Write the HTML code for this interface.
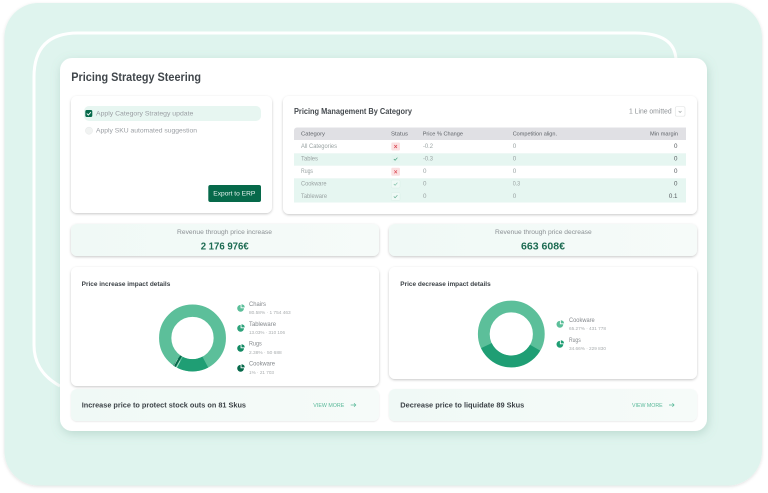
<!DOCTYPE html>
<html><head><meta charset="utf-8"><style>
html,body{margin:0;padding:0;background:#fff;width:768px;height:493px;overflow:hidden}
svg{display:block;filter:blur(.3px)}
text{font-family:"Liberation Sans",sans-serif}
.t{fill:#9a9ea3;font-size:6.5px}
.h{fill:#5f6368;font-size:5.6px}
.c{fill:#9aa3a3;font-size:6.2px}
.s{fill:#a8acae;font-size:4.6px}
.l{fill:#85898d;font-size:6.4px}
.b{fill:#3c4247;font-size:6.4px;font-weight:bold}
.bb{fill:#3c4247;font-size:7.6px;font-weight:bold}
.v{fill:#1c6b52;font-size:10.5px;font-weight:bold}
.m{fill:#58b898;font-size:5.8px}
</style></head><body>
<svg width="768" height="493" viewBox="0 0 768 493" xmlns="http://www.w3.org/2000/svg">
<defs>
<filter id="o" x="-5%" y="-5%" width="110%" height="110%"><feDropShadow dx="0" dy="1" stdDeviation="1.5" flood-color="#000" flood-opacity=".12"/></filter>
<filter id="m" x="-10%" y="-10%" width="120%" height="120%"><feDropShadow dx="1" dy="3" stdDeviation="5" flood-color="#6a9c8c" flood-opacity=".3"/></filter>
<filter id="c" x="-10%" y="-20%" width="120%" height="140%"><feDropShadow dx="0" dy="1" stdDeviation="1.2" flood-color="#000" flood-opacity=".22"/></filter>
<filter id="d" x="-10%" y="-20%" width="120%" height="140%"><feDropShadow dx="0" dy=".7" stdDeviation=".7" flood-color="#000" flood-opacity=".1"/></filter>
<linearGradient id="g" x1="0" y1="0" x2="1" y2="0"><stop offset="0" stop-color="#f0f9f6"/><stop offset="1" stop-color="#f6fbf9"/></linearGradient>
<symbol id="p" viewBox="-4 -4 8 8" overflow="visible"><path d="M-.4-3.1V.3H3A3.4 3.4 0 1 1-.4-3.1Z"/><path d="M.5-3.8A3.4 3.4 0 0 1 3.8-.6H.5Z"/></symbol>
</defs>

<rect x="4.500" y="3" width="757.500" height="482.500" rx="34" fill="#dff4ee" filter="url(#o)"/>
<path d="M60 386Q34 372 34 345L34 77Q34 33 78 33L635 33Q675 33 676 60" fill="none" stroke="#fff" stroke-width="3"/>
<rect x="60" y="58" width="647" height="373" rx="12" fill="#fff" filter="url(#m)"/>

<text x="71.300" y="81" font-size="11.500" font-weight="bold" fill="#40464b" textLength="129.700" lengthAdjust="spacingAndGlyphs">Pricing Strategy Steering</text>

<!-- left card -->
<rect x="71" y="96" width="201" height="117" rx="6" fill="#fff" filter="url(#c)"/>
<rect x="84" y="106" width="177" height="15" rx="5" fill="#e7f6f1"/>
<rect x="85.300" y="110" width="7" height="7" rx="1.500" fill="#06694a"/>
<path d="M86.800 113.500l1.500 1.600 2.600-2.900" fill="none" stroke="#fff" stroke-width=".9"/>
<text class="t" x="96" y="115.300" textLength="97.300" lengthAdjust="spacingAndGlyphs">Apply Category Strategy update</text>
<circle cx="89" cy="130.700" r="3.600" fill="#f1f3f2" stroke="#e6e8e8" stroke-width=".5"/>
<text class="t" x="96" y="132.300" textLength="101" lengthAdjust="spacingAndGlyphs">Apply SKU automated suggestion</text>
<rect x="208.300" y="185" width="52.700" height="17" rx="2" fill="#06694a"/>
<text x="213.300" y="195.700" font-size="6.500" fill="#e8f4f0" textLength="42" lengthAdjust="spacingAndGlyphs">Export to ERP</text>

<!-- right card -->
<rect x="283" y="96" width="414" height="118" rx="6" fill="#fff" filter="url(#c)"/>
<text x="294" y="113.800" font-size="8" font-weight="bold" fill="#454a4f" textLength="118" lengthAdjust="spacingAndGlyphs">Pricing Management By Category</text>
<text x="629" y="113.700" font-size="7" fill="#8d9195" textLength="42.700" lengthAdjust="spacingAndGlyphs">1 Line omitted</text>
<rect x="675.300" y="106.700" width="9.700" height="9.500" rx="1.500" fill="#fff" stroke="#e3e5e5" stroke-width=".7"/>
<path d="M678.700 111l1.400 1.500 1.400-1.500" fill="none" stroke="#9aa0a0" stroke-width=".6"/>

<path d="M294 130.500a3 3 0 0 1 3-3H686V140H294Z" fill="#e0e0e4"/>
<rect x="294" y="153.300" width="392" height="12.400" fill="#e6f6f1"/>
<rect x="294" y="178.300" width="392" height="24.200" fill="#e6f6f1"/>

<text class="h" x="301" y="135.300" textLength="24" lengthAdjust="spacingAndGlyphs">Category</text>
<text class="h" x="391" y="135.300" textLength="17" lengthAdjust="spacingAndGlyphs">Status</text>
<text class="h" x="422.700" y="135.300" textLength="40.300" lengthAdjust="spacingAndGlyphs">Price % Change</text>
<text class="h" x="512.700" y="135.300" textLength="44.300" lengthAdjust="spacingAndGlyphs">Competition align.</text>
<text class="h" x="650" y="135.300" textLength="28" lengthAdjust="spacingAndGlyphs">Min margin</text>

<text class="c" x="301" y="148" textLength="36" lengthAdjust="spacingAndGlyphs">All Categories</text>
<text class="c" x="301" y="160.300" textLength="17" lengthAdjust="spacingAndGlyphs">Tables</text>
<text class="c" x="301" y="173" textLength="12" lengthAdjust="spacingAndGlyphs">Rugs</text>
<text class="c" x="301" y="185.500" textLength="25.500" lengthAdjust="spacingAndGlyphs">Cookware</text>
<text class="c" x="301" y="198.200" textLength="26" lengthAdjust="spacingAndGlyphs">Tableware</text>

<rect x="391.300" y="142.500" width="8.700" height="8" rx="1.200" fill="#fbe0e1"/>
<path d="M394.300 145l2.700 3M397 145l-2.700 3" stroke="#d9434e" stroke-width=".7"/>
<rect x="391.300" y="155" width="8.700" height="8" rx="1.200" fill="#e3f5ef"/>
<path d="M393.800 159l1.300 1.300 2.300-2.600" fill="none" stroke="#3f9a78" stroke-width=".7"/>
<rect x="391.300" y="167.800" width="8.700" height="8" rx="1.200" fill="#fbe0e1"/>
<path d="M394.300 170.300l2.700 3M397 170.300l-2.700 3" stroke="#d9434e" stroke-width=".7"/>
<rect x="391.300" y="180" width="8.700" height="8" rx="1.200" fill="#eef9f5" stroke="#d6ece4" stroke-width=".4"/>
<path d="M393.800 184l1.300 1.300 2.300-2.600" fill="none" stroke="#7fbfa6" stroke-width=".7"/>
<rect x="391.300" y="192.500" width="8.700" height="8" rx="1.200" fill="#eef9f5" stroke="#d6ece4" stroke-width=".4"/>
<path d="M393.800 196.500l1.300 1.300 2.300-2.600" fill="none" stroke="#5fa98d" stroke-width=".7"/>

<text class="c" x="423" y="148" textLength="10" lengthAdjust="spacingAndGlyphs">-0.2</text>
<text class="c" x="423" y="160.300" textLength="10" lengthAdjust="spacingAndGlyphs">-0.3</text>
<text class="c" x="423" y="173">0</text>
<text class="c" x="423" y="185.500">0</text>
<text class="c" x="423" y="198.200">0</text>
<text class="c" x="512.700" y="148">0</text>
<text class="c" x="512.700" y="160.300">0</text>
<text class="c" x="512.700" y="173">0</text>
<text class="c" x="512.700" y="185.500" textLength="7.500" lengthAdjust="spacingAndGlyphs">0.3</text>
<text class="c" x="512.700" y="198.200">0</text>
<g fill="#54595d" font-size="6.200" text-anchor="end">
<text x="677.500" y="148">0</text><text x="677.500" y="160.300">0</text><text x="677.500" y="173">0</text><text x="677.500" y="185.500">0</text><text x="677.500" y="198.200">0.1</text>
</g>

<!-- stat cards -->
<rect x="71" y="224" width="308" height="32" rx="6" fill="url(#g)" filter="url(#c)"/>
<rect x="389" y="224" width="308" height="32" rx="6" fill="url(#g)" filter="url(#c)"/>
<text x="177" y="234" font-size="6.500" fill="#8b9094" textLength="95" lengthAdjust="spacingAndGlyphs">Revenue through price increase</text>
<text x="495" y="234" font-size="6.500" fill="#8b9094" textLength="96.700" lengthAdjust="spacingAndGlyphs">Revenue through price decrease</text>
<text class="v" x="200.700" y="249.600" textLength="48" lengthAdjust="spacingAndGlyphs">2 176 976€</text>
<text class="v" x="521" y="249.600" textLength="44" lengthAdjust="spacingAndGlyphs">663 608€</text>

<!-- impact cards -->
<rect x="71" y="267" width="308" height="119" rx="6" fill="#fff" filter="url(#c)"/>
<rect x="389" y="267" width="308" height="112" rx="6" fill="#fff" filter="url(#c)"/>
<text class="b" x="81.700" y="286.200" textLength="88.600" lengthAdjust="spacingAndGlyphs">Price increase impact details</text>
<text class="b" x="400.300" y="286.200" textLength="90.400" lengthAdjust="spacingAndGlyphs">Price decrease impact details</text>

<!-- donut left -->
<circle cx="192.500" cy="338" r="27.300" fill="none" stroke="#5cbf9a" stroke-width="12.300"/>
<path d="M205.300 362.100A27.300 27.300 0 0 1 180 362.300" fill="none" stroke="#1f9e74" stroke-width="12.300"/>
<path d="M178.800 361.700A27.300 27.300 0 0 1 176.800 360.400" fill="none" stroke="#06694a" stroke-width="12.300"/>
<path d="M180.100 360.700L174.800 370.700M177.600 359.100L172.300 368.900" stroke="#fff" stroke-width=".4"/>

<!-- donut right -->
<circle cx="511.300" cy="334" r="27.500" fill="none" stroke="#5cbf9a" stroke-width="11.800"/>
<path d="M535.100 347.700A27.500 27.500 0 0 1 486.400 345.600" fill="none" stroke="#1f9e74" stroke-width="11.800"/>

<!-- legends -->
<use href="#p" x="237" y="304" width="8" height="8" fill="#5cbf9a"/>
<use href="#p" x="237" y="324" width="8" height="8" fill="#2ea37b"/>
<use href="#p" x="237" y="344" width="8" height="8" fill="#138a63"/>
<use href="#p" x="237" y="364" width="8" height="8" fill="#06694a"/>
<use href="#p" x="556.300" y="320" width="8" height="8" fill="#5cbf9a"/>
<use href="#p" x="556.300" y="340" width="8" height="8" fill="#1f9e74"/>

<text class="l" x="249" y="306" textLength="17" lengthAdjust="spacingAndGlyphs">Chairs</text>
<text class="s" x="249" y="313.800" textLength="41.700" lengthAdjust="spacingAndGlyphs">80.58% · 1 754 463</text>
<text class="l" x="249" y="326" textLength="27" lengthAdjust="spacingAndGlyphs">Tableware</text>
<text class="s" x="249" y="334" textLength="36" lengthAdjust="spacingAndGlyphs">13.03% · 310 106</text>
<text class="l" x="249" y="345.600" textLength="12.700" lengthAdjust="spacingAndGlyphs">Rugs</text>
<text class="s" x="249" y="354" textLength="32.700" lengthAdjust="spacingAndGlyphs">2.38% · 50 688</text>
<text class="l" x="249" y="365.600" textLength="26" lengthAdjust="spacingAndGlyphs">Cookware</text>
<text class="s" x="249" y="373.800" textLength="25" lengthAdjust="spacingAndGlyphs">1% · 21 703</text>

<text class="l" x="569" y="322" textLength="25.700" lengthAdjust="spacingAndGlyphs">Cookware</text>
<text class="s" x="569" y="330" textLength="37" lengthAdjust="spacingAndGlyphs">65.27% · 431 778</text>
<text class="l" x="569" y="342" textLength="11.700" lengthAdjust="spacingAndGlyphs">Rugs</text>
<text class="s" x="569" y="349.800" textLength="37" lengthAdjust="spacingAndGlyphs">34.66% · 229 830</text>

<!-- bottom cards -->
<rect x="71" y="389" width="308" height="32" rx="6" fill="url(#g)" filter="url(#d)"/>
<rect x="389" y="389" width="308" height="32" rx="6" fill="url(#g)" filter="url(#d)"/>
<text class="bb" x="81.700" y="407.700" textLength="164.300" lengthAdjust="spacingAndGlyphs">Increase price to protect stock outs on 81 Skus</text>
<text class="bb" x="400.300" y="407.700" textLength="124" lengthAdjust="spacingAndGlyphs">Decrease price to liquidate 89 Skus</text>
<text class="m" x="313.300" y="407.200" textLength="31" lengthAdjust="spacingAndGlyphs">VIEW MORE</text>
<text class="m" x="632" y="407.200" textLength="30.700" lengthAdjust="spacingAndGlyphs">VIEW MORE</text>
<path d="M350.700 405h5M354 403.300l1.800 1.700-1.800 1.700" fill="none" stroke="#58b898" stroke-width=".7"/>
<path d="M669 405h5M672.300 403.300l1.800 1.700-1.800 1.700" fill="none" stroke="#58b898" stroke-width=".7"/>
</svg>
</body></html>
